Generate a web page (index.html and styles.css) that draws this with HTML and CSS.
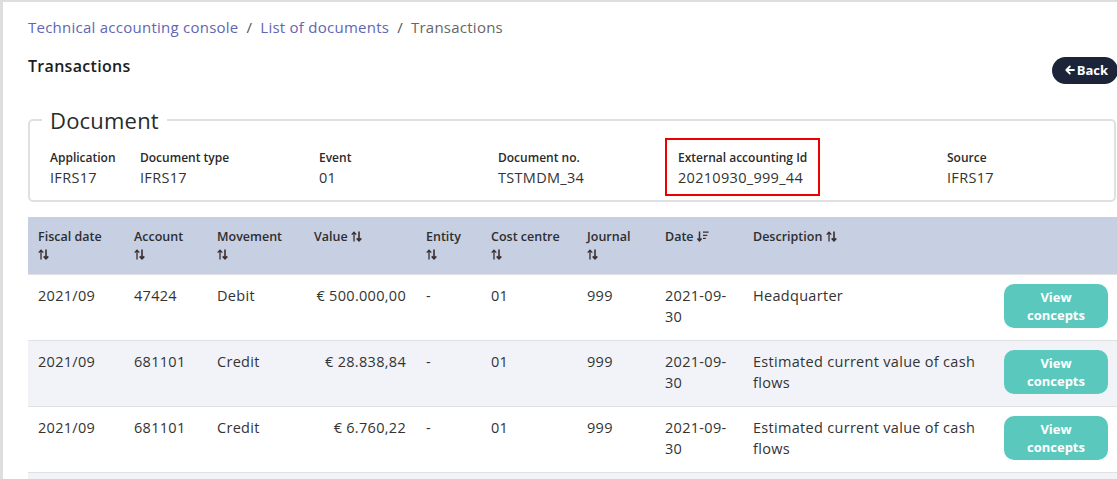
FILE: index.html
```html
<!DOCTYPE html>
<html>
<head>
<meta charset="utf-8">
<link rel="stylesheet" href="styles.css">
</head>
<body>
<div class="panel">
  <nav class="crumbs">
    <a class="crumb-link">Technical accounting console</a>
    <span class="sep">/</span>
    <a class="crumb-link">List of documents</a>
    <span class="sep">/</span>
    <span class="crumb-current">Transactions</span>
  </nav>
  <div class="title-row">
    <h1 class="title">Transactions</h1>
    <button class="back-btn"><svg class="back-ico" viewBox="0 0 10 10" width="10" height="10"><path d="M9 5H1.5M4.8 1.5L1.3 5l3.5 3.5" fill="none" stroke="#fff" stroke-width="1.8" stroke-linecap="round" stroke-linejoin="round"/></svg>Back</button>
  </div>

  <fieldset class="doc">
    <legend class="doc-legend">Document</legend>
    <div class="doc-grid">
      <div class="doc-item"><div class="doc-label">Application</div><div class="doc-value">IFRS17</div></div>
      <div class="doc-item"><div class="doc-label">Document type</div><div class="doc-value">IFRS17</div></div>
      <div class="doc-item"><div class="doc-label">Event</div><div class="doc-value">01</div></div>
      <div class="doc-item"><div class="doc-label">Document no.</div><div class="doc-value">TSTMDM_34</div></div>
      <div class="doc-item"><div class="doc-highlight"><div class="doc-label">External accounting Id</div><div class="doc-value">20210930_999_44</div></div></div>
      <div class="doc-item"><div class="doc-label">Source</div><div class="doc-value">IFRS17</div></div>
    </div>
  </fieldset>

  <table class="tx">
    <colgroup>
      <col class="c1"><col class="c2"><col class="c3"><col class="c4"><col class="c5">
      <col class="c6"><col class="c7"><col class="c8"><col class="c9"><col class="c10">
    </colgroup>
    <thead>
      <tr>
        <th>Fiscal date<br><svg class="sort" viewBox="0 0 11 11" width="11" height="11"><path d="M3 10.5V1.2M0.7 3.6L3 1.2l2.3 2.4" fill="none" stroke="#3b2e2e" stroke-width="1.3"/><path d="M8 0.5V9.8M5.7 7.4L8 9.8l2.3-2.4" fill="none" stroke="#3b2e2e" stroke-width="1.6"/></svg></th>
        <th>Account<br><svg class="sort" viewBox="0 0 11 11" width="11" height="11"><path d="M3 10.5V1.2M0.7 3.6L3 1.2l2.3 2.4" fill="none" stroke="#3b2e2e" stroke-width="1.3"/><path d="M8 0.5V9.8M5.7 7.4L8 9.8l2.3-2.4" fill="none" stroke="#3b2e2e" stroke-width="1.6"/></svg></th>
        <th>Movement<br><svg class="sort" viewBox="0 0 11 11" width="11" height="11"><path d="M3 10.5V1.2M0.7 3.6L3 1.2l2.3 2.4" fill="none" stroke="#3b2e2e" stroke-width="1.3"/><path d="M8 0.5V9.8M5.7 7.4L8 9.8l2.3-2.4" fill="none" stroke="#3b2e2e" stroke-width="1.6"/></svg></th>
        <th>Value <svg class="sort" viewBox="0 0 11 11" width="11" height="11"><path d="M3 10.5V1.2M0.7 3.6L3 1.2l2.3 2.4" fill="none" stroke="#3b2e2e" stroke-width="1.3"/><path d="M8 0.5V9.8M5.7 7.4L8 9.8l2.3-2.4" fill="none" stroke="#3b2e2e" stroke-width="1.6"/></svg></th>
        <th>Entity<br><svg class="sort" viewBox="0 0 11 11" width="11" height="11"><path d="M3 10.5V1.2M0.7 3.6L3 1.2l2.3 2.4" fill="none" stroke="#3b2e2e" stroke-width="1.3"/><path d="M8 0.5V9.8M5.7 7.4L8 9.8l2.3-2.4" fill="none" stroke="#3b2e2e" stroke-width="1.6"/></svg></th>
        <th>Cost centre<br><svg class="sort" viewBox="0 0 11 11" width="11" height="11"><path d="M3 10.5V1.2M0.7 3.6L3 1.2l2.3 2.4" fill="none" stroke="#3b2e2e" stroke-width="1.3"/><path d="M8 0.5V9.8M5.7 7.4L8 9.8l2.3-2.4" fill="none" stroke="#3b2e2e" stroke-width="1.6"/></svg></th>
        <th>Journal<br><svg class="sort" viewBox="0 0 11 11" width="11" height="11"><path d="M3 10.5V1.2M0.7 3.6L3 1.2l2.3 2.4" fill="none" stroke="#3b2e2e" stroke-width="1.3"/><path d="M8 0.5V9.8M5.7 7.4L8 9.8l2.3-2.4" fill="none" stroke="#3b2e2e" stroke-width="1.6"/></svg></th>
        <th>Date <svg class="sort" viewBox="0 0 12 11" width="12" height="11"><path d="M2.5 0.5V9.8M0.4 7.5L2.5 9.8l2.1-2.3" fill="none" stroke="#3b2e2e" stroke-width="1.5"/><path d="M6 1.2h5.6M6 4.3h4.3M6 7.4h2.8" fill="none" stroke="#3b2e2e" stroke-width="1.3"/></svg></th>
        <th>Description <svg class="sort" viewBox="0 0 11 11" width="11" height="11"><path d="M3 10.5V1.2M0.7 3.6L3 1.2l2.3 2.4" fill="none" stroke="#3b2e2e" stroke-width="1.3"/><path d="M8 0.5V9.8M5.7 7.4L8 9.8l2.3-2.4" fill="none" stroke="#3b2e2e" stroke-width="1.6"/></svg></th>
        <th></th>
      </tr>
    </thead>
    <tbody>
      <tr>
        <td>2021/09</td><td>47424</td><td>Debit</td><td class="num">€ 500.000,00</td><td>-</td><td>01</td><td>999</td><td>2021-09-30</td><td>Headquarter</td>
        <td class="act"><button class="view-btn">View concepts</button></td>
      </tr>
      <tr class="alt">
        <td>2021/09</td><td>681101</td><td>Credit</td><td class="num">€ 28.838,84</td><td>-</td><td>01</td><td>999</td><td>2021-09-30</td><td>Estimated current value of cash flows</td>
        <td class="act"><button class="view-btn">View concepts</button></td>
      </tr>
      <tr>
        <td>2021/09</td><td>681101</td><td>Credit</td><td class="num">€ 6.760,22</td><td>-</td><td>01</td><td>999</td><td>2021-09-30</td><td>Estimated current value of cash flows</td>
        <td class="act"><button class="view-btn">View concepts</button></td>
      </tr>
      <tr class="alt">
        <td></td><td></td><td></td><td></td><td></td><td></td><td></td><td></td><td></td><td></td>
      </tr>
    </tbody>
  </table>
</div>
</body>
</html>
```

FILE: styles.css
```css
html, body {
  margin: 0;
  padding: 0;
}
body {
  background: #dedede;
  padding: 2px 0 0 3px;
  overflow: hidden;
  height: 479px;
  box-sizing: border-box;
  font-family: "Open Sans", "Liberation Sans", sans-serif;
  color: #333;
}
.panel {
  background: #fff;
  width: 1150px;
  height: 600px;
  padding: 14px 0 0 25px;
  box-sizing: border-box;
}
.crumbs {
  width: 1100px;
  font-size: 15px;
  letter-spacing: 0.25px;
  line-height: 22px;
  height: 22px;
  display: flex;
  gap: 8px;
  align-items: center;
}
.crumb-link {
  color: #6166b3;
}
.sep {
  color: #555;
}
.crumb-current {
  color: #666;
}
.title-row {
  width: 1090px;
  display: flex;
  align-items: center;
  justify-content: space-between;
  margin-top: 16px;
  height: 30px;
}
.title {
  margin: 0;
  font-size: 16px;
  letter-spacing: 0.3px;
  font-weight: 600;
  color: #1c1c1c;
  line-height: 24px;
  position: relative;
  top: -3px;
}
.back-btn {
  background: #1b2439;
  color: #fff;
  border: 0;
  border-radius: 14px;
  height: 27px;
  padding: 0 10px 0 13px;
  font-family: inherit;
  font-size: 13px;
  font-weight: 700;
  display: flex;
  align-items: center;
  gap: 2px;
  position: relative;
  top: 1px;
}
.back-ico {
  display: block;
}
.doc {
  width: 1088px;
  box-sizing: border-box;
  margin: 23px 0 0 0;
  border: 2px solid #e0e0e0;
  border-radius: 5px;
  padding: 15px 20px 12px 20px;
  min-width: 0;
}
.doc-legend {
  font-size: 22px;
  font-weight: 400;
  letter-spacing: 0.2px;
  color: #2a2a2a;
  padding: 0 8px;
  margin-left: -8px;
  line-height: 26px;
}
.doc-grid {
  display: grid;
  grid-template-columns: 90px 179px 179px 180px 269px 1fr;
}
.doc-label {
  font-size: 12px;
  font-weight: 600;
  line-height: 20px;
  color: #2a2a2a;
  white-space: nowrap;
}
.doc-value {
  font-size: 14.5px;
  letter-spacing: 0.3px;
  line-height: 20px;
  color: #333;
}
.doc-highlight {
  border: 2px solid #ee0000;
  margin: -10px 0 -8px -13px;
  padding: 8px 11px 6px 11px;
  display: inline-block;
}
.tx {
  margin-top: 15px;
  width: 1100px;
  table-layout: fixed;
  border-collapse: collapse;
}
.c1 { width: 96px; }
.c2 { width: 83px; }
.c3 { width: 97px; }
.c4 { width: 112px; }
.c5 { width: 65px; }
.c6 { width: 96px; }
.c7 { width: 78px; }
.c8 { width: 88px; }
.c9 { width: 251px; }
.c10 { width: 134px; }
.tx thead tr {
  background: #c7cfe3;
}
.tx th {
  text-align: left;
  vertical-align: top;
  font-size: 12.5px;
  font-weight: 600;
  color: #2e2e2e;
  line-height: 18px;
  padding: 11px 10px 10px 10px;
  height: 36px;
  white-space: nowrap;
}
.sort {
  display: inline-block;
  vertical-align: -1px;
}
.tx td {
  vertical-align: top;
  font-size: 14.5px;
  letter-spacing: 0.3px;
  line-height: 21px;
  padding: 10px 10px 12px 10px;
  height: 42px;
  color: #333;
  border-top: 1.5px solid #e1e1e1;
}
.tx tr.alt {
  background: #f2f3f8;
}
.tx td.num {
  text-align: right;
}
.tx td.act {
  padding-top: 9px;
}
.view-btn {
  display: block;
  width: 104px;
  height: 44px;
  border: 0;
  border-radius: 10px;
  background: #5bc8bd;
  color: #fff;
  font-family: inherit;
  font-size: 13px;
  font-weight: 700;
  line-height: 18px;
  padding: 0 18px;
}
```
